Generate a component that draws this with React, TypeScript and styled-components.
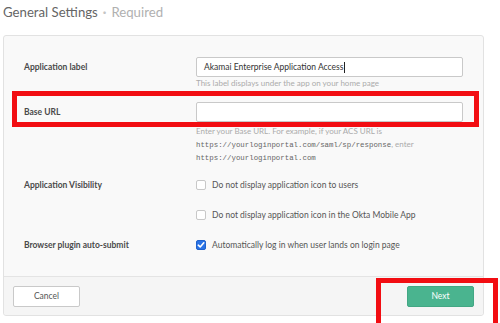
import React from "react";
import styled, { createGlobalStyle, css } from "styled-components";

const Global = createGlobalStyle`
  html, body { margin: 0; padding: 0; background: #ffffff; }
  body { font-family: Lato, "Open Sans", "Liberation Sans", sans-serif; }
  *, *::before, *::after { box-sizing: border-box; }
`;

const Page = styled.div`
  width: 500px;
  height: 323px;
  overflow: hidden;
  padding: 0 16px 0 3px;
`;

const Title = styled.h2`
  margin: 0;
  height: 35px;
  padding-top: 4px;
  display: flex;
  align-items: flex-start;
  font-size: 13.2px;
  line-height: 16px;
  font-weight: 400;
  color: #656565;
`;

const Sep = styled.span`
  color: #c4c4c4;
  font-weight: 700;
  margin: 0 5px 0 5px;
`;

const Muted = styled.span`
  color: #b0b0b0;
`;

const Panel = styled.div`
  background: #f9f9f9;
  border: 1px solid #e2e2e2;
  border-radius: 3px;
  display: flex;
  flex-direction: column;
`;

const Body = styled.div`
  padding: 21px 20px 21px 20px;
  display: flex;
  flex-direction: column;
  gap: 10px;
`;

const Row = styled.div<{ $highlight?: boolean; $gapAfter?: number }>`
  position: relative;
  display: grid;
  grid-template-columns: 172px 267px;
  align-items: start;
  margin-bottom: ${(p) => p.$gapAfter ?? 0}px;
  ${(p) =>
    p.$highlight &&
    css`
      &::after {
        content: "";
        position: absolute;
        left: -12px;
        right: -16px;
        top: -11px;
        height: 36px;
        border: 5px solid #f20d12;
        pointer-events: none;
      }
    `}
`;

const Label = styled.div`
  height: 20px;
  display: flex;
  align-items: center;
  font-size: 8.5px;
  font-weight: 700;
  color: #4a4a4a;
`;

const Field = styled.div`
  display: flex;
  flex-direction: column;
`;

const Input = styled.div`
  height: 20px;
  background: #fff;
  border: 1px solid #c9c9c9;
  border-radius: 2px;
  padding: 0 7px;
  display: flex;
  align-items: center;
  font-size: 8.5px;
  color: #333;
`;

const Caret = styled.span`
  display: inline-block;
  width: 1px;
  height: 11px;
  background: #222;
  margin-left: 1px;
`;

const Hint = styled.div<{ $lh?: number; $mt?: number }>`
  margin-top: ${(p) => p.$mt ?? 0}px;
  font-size: 8px;
  line-height: ${(p) => p.$lh ?? 12}px;
  color: #ababab;
`;

const Mono = styled.span`
  font-family: "Liberation Mono", "DejaVu Sans Mono", monospace;
  font-size: 7.4px;
  color: #666;
`;

const CheckRow = styled.label`
  height: 20px;
  display: flex;
  align-items: center;
  gap: 6px;
  font-size: 8.5px;
  color: #555;
`;

const Box = styled.span<{ $checked?: boolean }>`
  width: 10px;
  height: 10px;
  border-radius: 2px;
  flex: none;
  display: inline-flex;
  align-items: center;
  justify-content: center;
  ${(p) =>
    p.$checked
      ? css`
          background: #2a73e6;
          border: 1px solid #1f62cc;
        `
      : css`
          background: #fff;
          border: 1px solid #c8c8c8;
        `}
`;

const Footer = styled.div`
  border-top: 1px solid #e4e4e4;
  background: #f5f5f5;
  height: 39px;
  padding: 9px 9px 0 9px;
  display: flex;
  justify-content: space-between;
  align-items: flex-start;
  border-radius: 0 0 3px 3px;
`;

const Button = styled.button<{ $primary?: boolean; $highlight?: boolean }>`
  position: relative;
  width: 67px;
  height: 21px;
  border-radius: 2px;
  font-family: inherit;
  font-size: 8.5px;
  cursor: pointer;
  ${(p) =>
    p.$primary
      ? css`
          background: #4ab48f;
          border: 1px solid #43a784;
          color: #fff;
        `
      : css`
          background: #fff;
          border: 1px solid #c9c9c9;
          color: #555;
        `}
  ${(p) =>
    p.$highlight &&
    css`
      &::after {
        content: "";
        position: absolute;
        left: -32px;
        top: -9px;
        width: 122px;
        height: 60px;
        border: 5px solid #f20d12;
        pointer-events: none;
      }
    `}
`;

const Check = () => (
  <svg width="8" height="8" viewBox="0 0 8 8">
    <path d="M1.3 4.2 L3.2 6 L6.8 1.8" fill="none" stroke="#fff" strokeWidth="1.6" strokeLinecap="round" strokeLinejoin="round" />
  </svg>
);

export default function App() {
  return (
    <Page>
      <Global />
      <Title>
        General Settings<Sep>·</Sep>
        <Muted>Required</Muted>
      </Title>
      <Panel>
        <Body>
          <Row $gapAfter={3}>
            <Label>Application label</Label>
            <Field>
              <Input>
                Akamai Enterprise Application Access<Caret />
              </Input>
              <Hint>This label displays under the app on your home page</Hint>
            </Field>
          </Row>
          <Row $highlight>
            <Label>Base URL</Label>
            <Field>
              <Input />
              <Hint $lh={12.5} $mt={3}>
                Enter your Base URL. For example, if your ACS URL is
                <br />
                <Mono>https://yourloginportal.com/saml/sp/response</Mono>, enter
                <br />
                <Mono>https://yourloginportal.com</Mono>
              </Hint>
            </Field>
          </Row>
          <Row>
            <Label>Application Visibility</Label>
            <Field>
              <CheckRow>
                <Box />
                Do not display application icon to users
              </CheckRow>
            </Field>
          </Row>
          <Row>
            <Label />
            <Field>
              <CheckRow>
                <Box />
                Do not display application icon in the Okta Mobile App
              </CheckRow>
            </Field>
          </Row>
          <Row>
            <Label>Browser plugin auto-submit</Label>
            <Field>
              <CheckRow>
                <Box $checked>
                  <Check />
                </Box>
                Automatically log in when user lands on login page
              </CheckRow>
            </Field>
          </Row>
        </Body>
        <Footer>
          <Button>Cancel</Button>
          <Button $primary $highlight>
            Next
          </Button>
        </Footer>
      </Panel>
    </Page>
  );
}
